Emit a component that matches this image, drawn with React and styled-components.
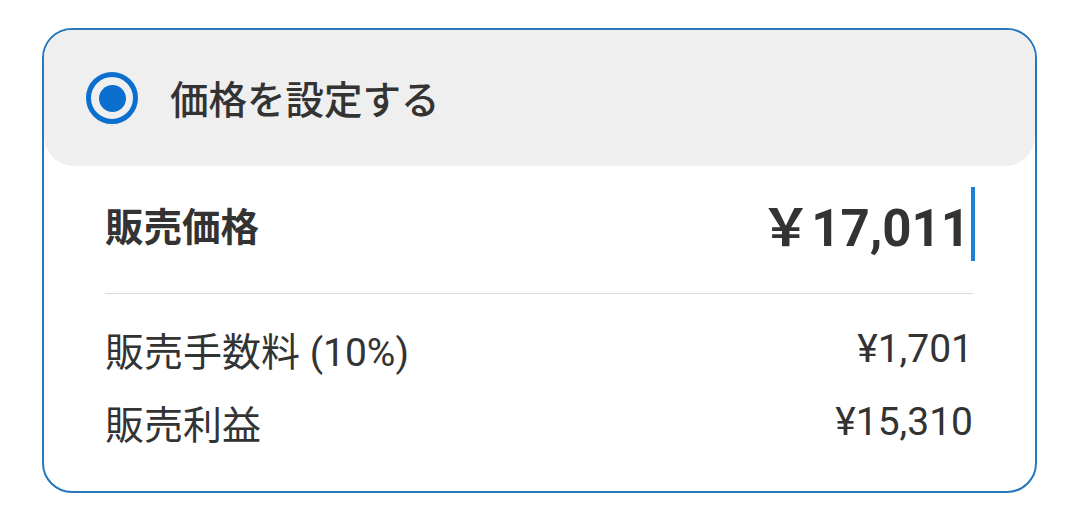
import React from 'react'
import styled, { createGlobalStyle } from 'styled-components'

const GlobalStyle = createGlobalStyle`
  html, body {
    margin: 0;
    background: #ffffff;
  }
  body {
    font-family: Roboto, "Noto Sans CJK JP", sans-serif;
    color: #333333;
  }
`

const Page = styled.div`
  padding: 28px 43px 0 42px;
`

const Card = styled.div`
  border: 2px solid #2777bd;
  border-radius: 30px;
  overflow: hidden;
  background: #ffffff;
`

const Header = styled.div`
  display: flex;
  align-items: center;
  gap: 32px;
  height: 136px;
  padding-left: 42px;
  background: #efefef;
  border-radius: 0 0 30px 30px;
`

const Radio = styled.span`
  box-sizing: border-box;
  width: 52px;
  height: 52px;
  border-radius: 50%;
  border: 5px solid #0b6fd0;
  display: flex;
  align-items: center;
  justify-content: center;

  &::after {
    content: '';
    width: 27px;
    height: 27px;
    border-radius: 50%;
    background: #0b6fd0;
  }
`

const HeaderLabel = styled.span`
  font-family: "Noto Sans CJK JP", sans-serif;
  font-size: 38.5px;
  font-weight: 500;
  color: #333333;
  margin-top: -2px;
`

const Body = styled.div`
  padding: 0 62px 33px 61px;
`

const PriceRow = styled.div`
  display: flex;
  align-items: center;
  justify-content: space-between;
  box-sizing: border-box;
  height: 128px;
  padding-bottom: 12px;
  border-bottom: 1.5px solid #dadada;
`

const PriceLabel = styled.span`
  font-family: "Noto Sans CJK JP", sans-serif;
  font-size: 38.5px;
  font-weight: 700;
  color: #333333;
`

const PriceInput = styled.div`
  display: flex;
  align-items: center;
  font-size: 51px;
  font-weight: 700;
  color: #333333;
  margin-right: -2px;
`

const Caret = styled.span`
  width: 4px;
  height: 74px;
  background: #1a80d8;
  margin-left: 1px;
`

const Breakdown = styled.div`
  padding-top: 18px;
`

const Line = styled.div`
  display: flex;
  align-items: center;
  justify-content: space-between;
  height: 73px;
  font-size: 39px;
  font-weight: 400;
  color: #333333;
`

export default function App() {
  return (
    <>
      <GlobalStyle />
      <Page>
        <Card>
          <Header>
            <Radio />
            <HeaderLabel>価格を設定する</HeaderLabel>
          </Header>
          <Body>
            <PriceRow>
              <PriceLabel>販売価格</PriceLabel>
              <PriceInput>
                ￥17,011
                <Caret />
              </PriceInput>
            </PriceRow>
            <Breakdown>
              <Line>
                <span>販売手数料 (10%)</span>
                <span>¥1,701</span>
              </Line>
              <Line>
                <span>販売利益</span>
                <span>¥15,310</span>
              </Line>
            </Breakdown>
          </Body>
        </Card>
      </Page>
    </>
  )
}
